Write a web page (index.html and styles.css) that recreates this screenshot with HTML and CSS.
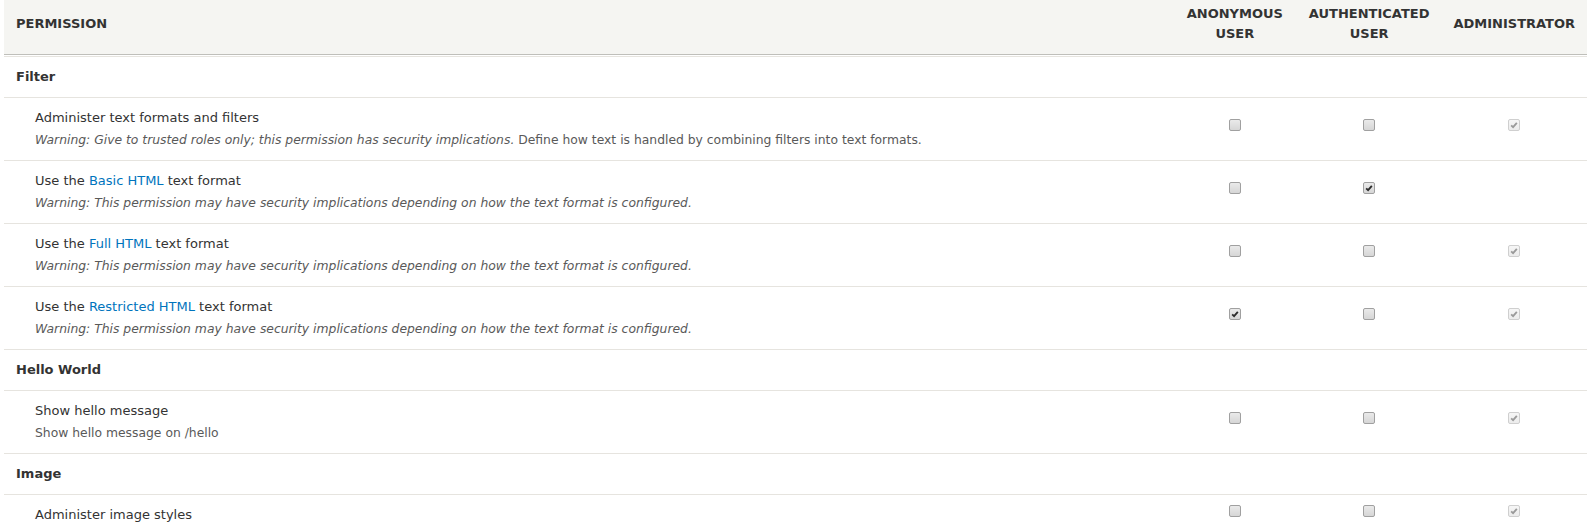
FILE: index.html
```html
<!DOCTYPE html>
<html lang="en">
<head>
<meta charset="utf-8">
<title>Permissions</title>
<link rel="stylesheet" href="styles.css">
</head>
<body>
<table class="perm-table">
  <thead>
    <tr>
      <th class="col-perm">Permission</th>
      <th class="col-role col-anon">Anonymous user</th>
      <th class="col-role">Authenticated user</th>
      <th class="col-role">Administrator</th>
    </tr>
  </thead>
  <tbody>
    <tr class="module-row">
      <td colspan="4" class="module">Filter</td>
    </tr>
    <tr>
      <td class="perm">
        <div class="title">Administer text formats and filters</div>
        <div class="description"><em>Warning: Give to trusted roles only; this permission has security implications.</em> Define how text is handled by combining filters into text formats.</div>
      </td>
      <td class="check"><div class="cb-wrap"><span class="cb"></span></div></td>
      <td class="check"><div class="cb-wrap"><span class="cb"></span></div></td>
      <td class="check"><div class="cb-wrap"><span class="cb cb-disabled"><svg viewBox="0 0 12 12"><path d="M2.6 6.4 L4.9 8.6 L9.4 3.4"/></svg></span></div></td>
    </tr>
    <tr>
      <td class="perm">
        <div class="title">Use the <a href="#">Basic HTML</a> text format</div>
        <div class="description"><em>Warning: This permission may have security implications depending on how the text format is configured.</em></div>
      </td>
      <td class="check"><div class="cb-wrap"><span class="cb"></span></div></td>
      <td class="check"><div class="cb-wrap"><span class="cb cb-checked"><svg viewBox="0 0 12 12"><path d="M2.6 6.4 L4.9 8.6 L9.4 3.4"/></svg></span></div></td>
      <td class="check"></td>
    </tr>
    <tr>
      <td class="perm">
        <div class="title">Use the <a href="#">Full HTML</a> text format</div>
        <div class="description"><em>Warning: This permission may have security implications depending on how the text format is configured.</em></div>
      </td>
      <td class="check"><div class="cb-wrap"><span class="cb"></span></div></td>
      <td class="check"><div class="cb-wrap"><span class="cb"></span></div></td>
      <td class="check"><div class="cb-wrap"><span class="cb cb-disabled"><svg viewBox="0 0 12 12"><path d="M2.6 6.4 L4.9 8.6 L9.4 3.4"/></svg></span></div></td>
    </tr>
    <tr>
      <td class="perm">
        <div class="title">Use the <a href="#">Restricted HTML</a> text format</div>
        <div class="description"><em>Warning: This permission may have security implications depending on how the text format is configured.</em></div>
      </td>
      <td class="check"><div class="cb-wrap"><span class="cb cb-checked"><svg viewBox="0 0 12 12"><path d="M2.6 6.4 L4.9 8.6 L9.4 3.4"/></svg></span></div></td>
      <td class="check"><div class="cb-wrap"><span class="cb"></span></div></td>
      <td class="check"><div class="cb-wrap"><span class="cb cb-disabled"><svg viewBox="0 0 12 12"><path d="M2.6 6.4 L4.9 8.6 L9.4 3.4"/></svg></span></div></td>
    </tr>
    <tr class="module-row">
      <td colspan="4" class="module">Hello World</td>
    </tr>
    <tr>
      <td class="perm">
        <div class="title">Show hello message</div>
        <div class="description">Show hello message on /hello</div>
      </td>
      <td class="check"><div class="cb-wrap"><span class="cb"></span></div></td>
      <td class="check"><div class="cb-wrap"><span class="cb"></span></div></td>
      <td class="check"><div class="cb-wrap"><span class="cb cb-disabled"><svg viewBox="0 0 12 12"><path d="M2.6 6.4 L4.9 8.6 L9.4 3.4"/></svg></span></div></td>
    </tr>
    <tr class="module-row">
      <td colspan="4" class="module">Image</td>
    </tr>
    <tr>
      <td class="perm">
        <div class="title">Administer image styles</div>
      </td>
      <td class="check"><div class="cb-wrap"><span class="cb"></span></div></td>
      <td class="check"><div class="cb-wrap"><span class="cb"></span></div></td>
      <td class="check"><div class="cb-wrap"><span class="cb cb-disabled"><svg viewBox="0 0 12 12"><path d="M2.6 6.4 L4.9 8.6 L9.4 3.4"/></svg></span></div></td>
    </tr>
  </tbody>
</table>
</body>
</html>
```
FILE: styles.css
```css
html, body {
  margin: 0;
  padding: 0;
  background: #fff;
}

body {
  font-family: "DejaVu Sans", Verdana, sans-serif;
  font-size: 13px;
  line-height: 20px;
  color: #333;
}

.perm-table {
  margin-left: 4px;
  width: 1583px;
  border-collapse: separate;
  border-spacing: 0;
}

.perm-table th {
  font-weight: bold;
  text-transform: uppercase;
  color: #333;
  padding: 4px 12px 12px;
  vertical-align: middle;
  border-bottom: 1px solid #e6e4df;
  background: linear-gradient(to bottom,
      #f5f5f2 calc(100% - 2px),
      #bfbfba calc(100% - 2px),
      #bfbfba calc(100% - 1px),
      #fff calc(100% - 1px));
  background-clip: padding-box;
}

.perm-table th.col-perm {
  text-align: left;
}

.perm-table th.col-role {
  text-align: center;
  width: 1px;
}

.perm-table th.col-anon {
  min-width: 100px;
}

.perm-table td {
  padding: 10px 12px;
  border-bottom: 1px solid #e6e4df;
  vertical-align: middle;
}

.perm-table td.module {
  font-weight: bold;
}

.perm-table td.perm {
  padding-left: 31px;
}

.title a {
  color: #0074bd;
  text-decoration: none;
}

.description {
  margin-top: 2px;
  font-size: 12.35px;
  line-height: 20px;
  color: #595959;
}

.description em {
  font-style: italic;
}

.perm-table td.check {
  text-align: center;
}

.cb-wrap {
  display: flex;
  justify-content: center;
  padding-bottom: 8px;
}

.cb {
  display: block;
  box-sizing: border-box;
  width: 12px;
  height: 12px;
  border: 1px solid #a0a0a0;
  border-radius: 2px;
  background: linear-gradient(to bottom, #eaeaea, #d6d6d6);
}

.cb svg {
  display: block;
  width: 10px;
  height: 10px;
  fill: none;
  stroke-width: 2.2;
  stroke-linecap: butt;
  stroke-linejoin: miter;
}

.cb-checked svg {
  stroke: #2b2b2b;
}

.cb-disabled {
  border-color: #cfcfcf;
  background: linear-gradient(to bottom, #f6f6f6, #ececec);
}

.cb-disabled svg {
  stroke: #9a9a9a;
}
```
